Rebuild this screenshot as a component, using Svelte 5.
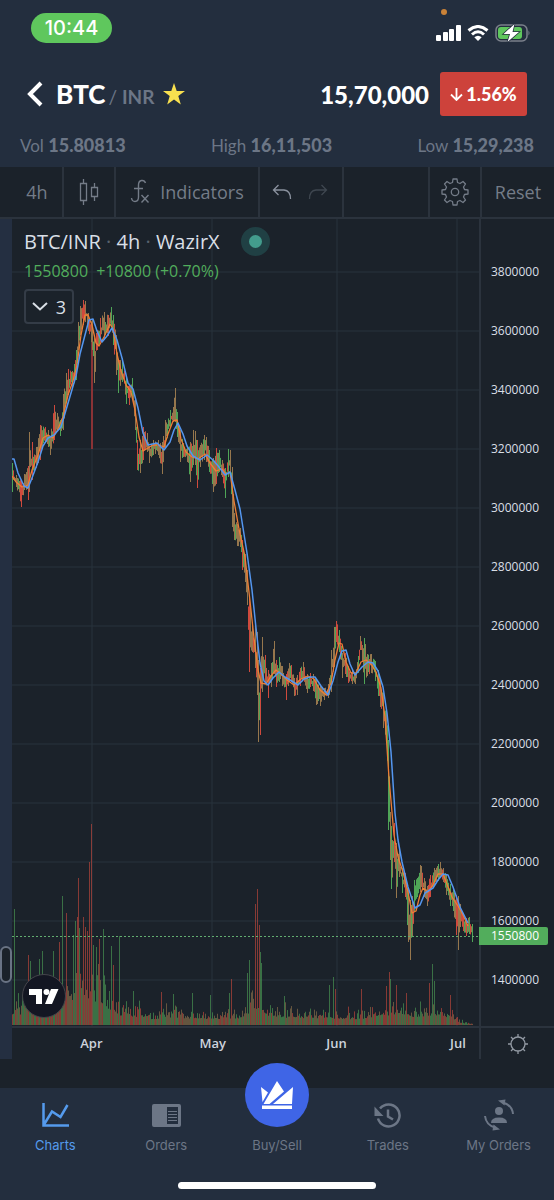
<script lang="ts">
    // [x, high, low] of the price envelope
    const envelope = [
        [12, 463, 492], [16, 475, 487], [21, 480, 507], [24, 474, 490], [28, 466, 500], [29, 432, 492],
        [32, 442, 480], [36, 447, 468], [40, 425, 460], [45, 427, 442], [48, 430, 447], [50, 436, 455],
        [54, 405, 440], [57, 413, 430], [60, 420, 436], [63, 394, 430], [66, 373, 400], [68, 369, 395],
        [72, 371, 387], [76, 350, 380], [78, 322, 350], [80, 306, 335], [83, 300, 325], [85, 301, 322],
        [88, 313, 331], [92, 320, 350], [94, 338, 383], [97, 330, 350], [100, 318, 342], [104, 312, 340],
        [108, 315, 336], [111, 307, 327], [113, 315, 345], [116, 335, 375], [118, 360, 393], [122, 358, 382],
        [126, 376, 404], [129, 385, 405], [132, 378, 398], [135, 400, 430], [137, 440, 470], [140, 440, 473],
        [143, 427, 460], [147, 433, 452], [149, 446, 463], [153, 440, 455], [158, 440, 455], [162, 442, 474],
        [165, 420, 447], [170, 410, 428], [173, 407, 422], [175, 388, 422], [177, 412, 437], [180, 430, 462],
        [183, 443, 457], [187, 448, 462], [190, 442, 482], [193, 430, 465], [195, 431, 465], [197, 440, 488],
        [200, 445, 467], [204, 435, 460], [206, 437, 462], [209, 450, 472], [213, 458, 492], [216, 448, 484],
        [219, 450, 472], [222, 460, 477], [225, 468, 498], [228, 449, 477], [230, 450, 474], [232, 467, 527],
        [234, 513, 540], [237, 524, 546], [240, 528, 547], [242, 540, 570], [245, 554, 582], [247, 570, 605],
        [249, 595, 672], [252, 624, 652], [255, 625, 668], [257, 632, 695], [258, 660, 742], [260, 668, 735],
        [262, 637, 692], [265, 655, 684], [268, 670, 698], [271, 663, 687], [274, 641, 674], [276, 660, 687],
        [279, 657, 682], [282, 666, 686], [286, 674, 700], [289, 663, 682], [291, 665, 682], [294, 678, 696],
        [297, 675, 695], [300, 668, 686], [303, 662, 680], [307, 674, 693], [310, 673, 687], [313, 674, 691],
        [316, 680, 705], [320, 686, 706], [324, 688, 700], [328, 684, 698], [331, 650, 692], [334, 627, 667],
        [336, 621, 642], [339, 630, 652], [342, 653, 678], [345, 653, 674], [348, 666, 683], [352, 670, 684],
        [355, 673, 684], [358, 656, 673], [360, 636, 650], [362, 645, 662], [364, 638, 684], [367, 654, 676],
        [371, 654, 673], [375, 661, 681], [378, 670, 696], [380, 678, 707], [383, 693, 728], [386, 708, 742],
        [388, 740, 830], [390, 812, 860], [391, 826, 889], [394, 823, 862], [396, 843, 898], [399, 848, 877],
        [402, 868, 893], [405, 873, 897], [408, 890, 942], [410, 900, 960], [412, 896, 937], [414, 880, 912],
        [417, 878, 897], [420, 865, 892], [421, 866, 887], [424, 878, 897], [427, 886, 906], [430, 875, 897],
        [434, 868, 886], [438, 864, 881], [440, 862, 877], [443, 868, 882], [446, 874, 895], [450, 884, 906],
        [453, 888, 911], [456, 895, 935], [458, 896, 950], [460, 904, 927], [463, 913, 931], [466, 918, 936],
        [469, 917, 934], [472, 924, 942],
    ];

    const volumeLevels = [
        [12, 34], [22, 34], [32, 52], [50, 54], [62, 72], [76, 86], [90, 86], [100, 66], [108, 50],
        [120, 30], [134, 28], [150, 18], [168, 24], [185, 22], [200, 20], [222, 20], [240, 22], [252, 46],
        [264, 32], [285, 24], [310, 22], [340, 20], [355, 18], [378, 24], [395, 34], [415, 26],
        [432, 32], [452, 24], [458, 8], [472, 2],
    ];

    // [x, height, rising]
    const volumeSpikes = [
        [15, 116, 1], [29, 70, 0], [31, 64, 1], [40, 66, 1], [43, 74, 1], [54, 74, 1], [60, 83, 0],
        [63, 129, 1], [67, 112, 0], [74, 90, 1], [76, 104, 1], [78, 108, 0], [79, 147, 0], [80, 97, 1],
        [84, 108, 0], [86, 98, 0], [88, 94, 0], [90, 163, 0], [92, 201, 0], [94, 80, 1], [97, 78, 1],
        [100, 86, 0], [104, 96, 1], [112, 79, 1], [114, 60, 0], [120, 89, 1], [134, 34, 1], [162, 33, 0],
        [174, 31, 1], [193, 32, 1], [211, 30, 1], [230, 32, 1], [232, 46, 0], [248, 52, 1], [250, 65, 1],
        [256, 121, 0], [258, 136, 0], [260, 100, 0], [261, 73, 1], [262, 62, 1], [285, 29, 1],
        [330, 40, 1], [334, 48, 1], [336, 36, 0], [362, 36, 0], [387, 39, 0], [390, 53, 0], [391, 46, 1],
        [397, 40, 0], [407, 32, 0], [430, 42, 0], [433, 61, 1], [435, 44, 1], [451, 30, 0],
    ];

    const slowAverage = [
        [12, 459], [14, 459], [18, 473], [24, 486], [28, 488], [32, 478], [38, 462], [43, 446], [48, 438],
        [54, 435], [61, 427], [66, 410], [71, 393], [76, 376], [80, 354], [85, 335], [89, 320], [93, 319],
        [97, 331], [102, 342], [107, 336], [112, 328], [117, 340], [122, 358], [128, 383], [133, 389],
        [138, 408], [143, 433], [148, 445], [157, 443], [164, 450], [170, 442], [174, 430], [178, 423],
        [183, 434], [187, 446], [193, 456], [200, 460], [207, 455], [213, 460], [219, 467], [225, 475],
        [230, 472], [235, 490], [240, 509], [247, 553], [252, 590], [256, 628], [260, 663], [264, 681],
        [268, 685], [273, 678], [279, 672], [285, 677], [290, 680], [298, 685], [304, 679], [310, 677],
        [315, 677], [321, 686], [328, 695], [333, 681], [338, 662], [342, 651], [346, 650], [350, 664],
        [355, 675], [362, 667], [368, 662], [373, 663], [378, 671], [383, 687], [387, 713], [391, 752],
        [395, 813], [398, 840], [402, 862], [408, 887], [415, 908], [420, 905], [425, 893], [433, 888],
        [438, 880], [443, 874], [448, 875], [453, 887], [460, 907], [468, 923],
    ];

    const fastAverage = [
        [12, 476], [16, 482], [22, 487], [28, 485], [32, 470], [38, 455], [43, 438], [48, 435], [53, 438],
        [58, 429], [63, 417], [68, 395], [73, 381], [77, 365], [81, 335], [85, 315], [88, 315], [92, 325],
        [96, 343], [99, 346], [104, 337], [110, 324], [113, 329], [117, 354], [121, 371], [126, 385],
        [131, 392], [135, 410], [139, 437], [143, 451], [148, 448], [153, 445], [159, 445], [164, 447],
        [168, 434], [173, 421], [177, 420], [181, 439], [186, 452], [192, 457], [198, 459], [205, 454],
        [210, 463], [216, 471], [222, 469], [226, 474], [230, 472], [234, 501], [239, 529], [245, 557],
        [250, 601], [254, 638], [258, 670], [261, 683], [266, 684], [271, 676], [276, 670], [281, 674],
        [287, 680], [294, 685], [301, 679], [308, 676], [314, 679], [320, 690], [326, 695], [331, 683],
        [335, 660], [339, 643], [342, 644], [346, 662], [351, 673], [356, 673], [361, 662], [366, 660],
        [371, 664], [376, 672], [381, 688], [385, 717], [389, 778], [394, 835], [398, 857], [403, 872],
        [408, 892], [412, 913], [416, 911], [420, 895], [423, 888], [428, 892], [433, 885], [438, 874],
        [443, 874], [447, 884], [452, 897], [458, 906], [463, 915], [468, 926],
    ];

    const gridRows = Array.from({ length: 13 }, (_, i) => 272 + i * 59);
    const gridColumns = [92, 212, 337, 457];
    const prices = Array.from({ length: 13 }, (_, i) => 3800000 - i * 200000);
    const months = [
        { name: "Apr", at: "17%" },
        { name: "May", at: "43%" },
        { name: "Jun", at: "69.5%" },
        { name: "Jul", at: "95.5%" },
    ];

    let seed = 41;
    const random = () => {
        seed = (seed * 16807) % 2147483647;
        return seed / 2147483647;
    };

    const sample = (points: number[][], x: number, column: number) => {
        const next = points.findIndex((p) => p[0] >= x);
        if (next <= 0) return points[0][column];
        const a = points[next - 1];
        const b = points[next];
        return a[column] + ((b[column] - a[column]) * (x - a[0])) / (b[0] - a[0]);
    };

    const toLine = (points: number[][]) => points.map((p) => p.join(",")).join(" ");

    const tones = ["up", "down", "mixed", "mixed", "up", "mixed", "down", "mixed"];
    const candles = Array.from({ length: 461 }, (_, i) => {
        const x = 12 + i;
        const high = sample(envelope, x, 1);
        const low = sample(envelope, x, 2);
        const range = low - high;
        const exact = envelope.some((p) => p[0] === x);
        return {
            x,
            top: high + (exact ? 0 : random() * range * 0.45),
            bottom: low - (exact ? 0 : random() * range * 0.45),
            tone: tones[Math.floor(random() * tones.length)],
        };
    });

    const volumes = Array.from({ length: 461 }, (_, i) => {
        const x = 12 + i;
        const level = sample(volumeLevels, x, 1);
        const height = level * (0.3 + 0.7 * random() * random());
        return { x, height, tone: random() < 0.3 ? "up" : random() < 0.4 ? "down" : "mixed" };
    });
</script>

<div class="app">
    <div class="status">
        <span class="clock">10:44</span>
        <div class="indicators">
            <span class="recording"></span>
            <svg width="25" height="16" viewBox="0 0 25 16" fill="#fff">
                <rect x="0" y="10" width="5" height="6" rx="1" />
                <rect x="7" y="7" width="5" height="9" rx="1" />
                <rect x="13" y="4" width="5" height="12" rx="1" />
                <rect x="20" y="0" width="5" height="16" rx="1" />
            </svg>
            <svg width="22" height="16" viewBox="0 0 22 16" fill="none" stroke="#fff" stroke-width="3">
                <path d="M1.500 5.500Q11-2.500 20.500 5.500" />
                <path d="M5 9.500Q11 4 17 9.500" />
                <path d="M11 16 7.300 12.300Q11 9.200 14.700 12.300Z" fill="#fff" stroke="none" />
            </svg>
            <svg width="36" height="18" viewBox="0 0 36 18">
                <rect x="1" y="1" width="31" height="16" rx="5" fill="none" stroke="#7b808b" stroke-width="1.500" />
                <path d="M33.500 6.500Q35.500 9 33.500 11.500Z" fill="#7b808b" />
                <rect x="3" y="3" width="24" height="12" rx="3" fill="#5fc75d" />
                <path
                    d="M19.500 0 8.500 10H15L12.500 18 24 8H17.500Z"
                    fill="#fff"
                    stroke="#232e3e"
                    stroke-width="1.500"
                    paint-order="stroke"
                />
            </svg>
        </div>
    </div>

    <header>
        <button class="back" aria-label="Back">
            <svg width="16" height="26" viewBox="0 0 16 26" fill="none" stroke="#fff" stroke-width="4">
                <path d="M14 2 3 13 14 24" />
            </svg>
        </button>
        <h1>BTC<span>/ <b>INR</b></span></h1>
        <button class="star" aria-label="Favourite">
            <svg width="22" height="22" viewBox="0 0 22 22" fill="#f8e04f">
                <path d="M11 0 13.700 8H22L15.300 13 17.800 21.500 11 16.500 4.200 21.500 6.700 13 0 8H8.300Z" />
            </svg>
        </button>
        <strong class="last">15,70,000</strong>
        <span class="change">
            <svg width="13" height="13" viewBox="0 0 13 13" fill="none" stroke="#fff" stroke-width="1.800">
                <path d="M6.500 0V12M1 6.500 6.500 12 12 6.500" />
            </svg>
            1.56%
        </span>
    </header>

    <div class="stats">
        <span>Vol <b>15.80813</b></span>
        <span>High <b>16,11,503</b></span>
        <span>Low <b>15,29,238</b></span>
    </div>

    <main>
        <div class="toolbar">
            <button class="interval">4h</button>
            <button class="style" aria-label="Chart style">
                <svg width="20" height="28" viewBox="0 0 20 28" fill="none" stroke="currentColor" stroke-width="1.300">
                    <path d="M1.500 5.500H7.500V22.500H1.500ZM4.500 1V5.500M4.500 22.500V27M12.500 9.500H18.500V18.500H12.500ZM15.500 5V9.500M15.500 18.500V23" />
                </svg>
            </button>
            <button class="functions">
                <svg width="20" height="26" viewBox="0 0 20 26" fill="none" stroke="currentColor" stroke-width="1.400">
                    <path d="M15.500 4Q14.500 1 11.500 1.500 8.500 2 8.500 6V18Q8.500 22.500 5 22.500 2 22.500 1.500 19M4 9.500H13M11.500 16 18.500 23.500M18.500 16 11.500 23.500" />
                </svg>
                Indicators
            </button>
            <div class="history">
                <button aria-label="Undo">
                    <svg width="20" height="16" viewBox="0 0 20 16" fill="none" stroke="#8b929e" stroke-width="1.300">
                        <path d="M6.500 1 1.500 6 6.500 11M1.500 6H12Q18.500 6.500 18.500 15" />
                    </svg>
                </button>
                <button aria-label="Redo" disabled>
                    <svg width="20" height="16" viewBox="0 0 20 16" fill="none" stroke="#3f4750" stroke-width="1.300">
                        <path d="M13.500 1 18.500 6 13.500 11M18.500 6H8Q1.500 6.500 1.500 15" />
                    </svg>
                </button>
            </div>
            <button class="settings" aria-label="Settings">
                <svg width="28" height="28" viewBox="0 0 28 28" fill="none" stroke="currentColor" stroke-width="1.300" stroke-linejoin="round">
                    <path
                        d="M12 1H16L16.500 4.500 19 5.500 22 3.500 24.500 6 22.500 9 23.500 11.500 27 12V16L23.500 16.500 22.500 19 24.500 22 22 24.500 19 22.500 16.500 23.500 16 27H12L11.500 23.500 9 22.500 6 24.500 3.500 22 5.500 19 4.500 16.500 1 16V12L4.500 11.500 5.500 9 3.500 6 6 3.500 9 5.500 11.500 4.500Z"
                    />
                    <circle cx="14" cy="14" r="3.700" />
                </svg>
            </button>
            <button class="reset">Reset</button>
        </div>

        <div class="chart">
            <div class="plot">
                <svg class="series" viewBox="12 219 467 807" preserveAspectRatio="none" role="img" aria-label="BTC/INR price">
                    {#each gridRows as y}
                        <path class="grid" d="M12 {y}H479" />
                    {/each}
                    {#each gridColumns as x}
                        <path class="grid" d="M{x} 219V1026" />
                    {/each}
                    <g class="volume">
                        {#each volumes as bar}
                            <rect class={bar.tone} x={bar.x} y={1025 - bar.height} width="1" height={bar.height} />
                        {/each}
                        {#each volumeSpikes as [x, height, rising]}
                            <rect class={rising ? "up" : "down"} x={x - 1} y={1025 - height} width="1" {height} />
                        {/each}
                    </g>
                    <path class="wick" d="M92 340V449" />
                    {#each candles as candle}
                        <rect
                            class={candle.tone}
                            x={candle.x}
                            y={candle.top}
                            width="1"
                            height={Math.max(2, candle.bottom - candle.top)}
                        />
                    {/each}
                    <polyline class="fast" points={toLine(fastAverage)} />
                    <polyline class="slow" points={toLine(slowAverage)} />
                    <path class="current" d="M12 936.500H479" />
                </svg>

                <div class="legend">
                    <div class="title">
                        <h2>BTC/INR <i>·</i> 4h <i>·</i> WazirX</h2>
                        <span class="open"></span>
                    </div>
                    <p>1550800 <span>+10800 (+0.70%)</span></p>
                    <button>
                        <svg width="16" height="9" viewBox="0 0 16 9" fill="none" stroke="currentColor" stroke-width="2">
                            <path d="M1 1 8 7.500 15 1" />
                        </svg>
                        3
                    </button>
                </div>

                <a class="brand" href="#chart" aria-label="TradingView">
                    <svg width="30" height="15" viewBox="0 0 30 15" fill="#fff">
                        <path d="M0 0H13V15H7V6H0ZM22 0H29.500L23 15H16Z" />
                        <circle cx="17.500" cy="3" r="3" />
                    </svg>
                </a>
            </div>

            <div class="prices">
                {#each prices as price}
                    <span>{price}</span>
                {/each}
                <strong>1550800</strong>
            </div>

            <svg class="months">
                {#each months as month}
                    <text x={month.at} y="20">{month.name}</text>
                {/each}
            </svg>

            <button class="scale" aria-label="Scale settings">
                <svg width="20" height="20" viewBox="0 0 20 20" fill="none" stroke="currentColor" stroke-width="1.300">
                    <circle cx="10" cy="10" r="7" />
                    <path d="M10 3V0M10 17V20M3 10H0M17 10H20M5 5 3 3M15 5 17 3M5 15 3 17M15 15 17 17" />
                </svg>
            </button>
        </div>
        <span class="drawer"></span>
    </main>

    <nav>
        <a class="active" href="#charts">
            <span class="icon">
                <svg width="27" height="24" viewBox="0 0 27 24" fill="none" stroke="currentColor" stroke-width="2.500">
                    <path d="M1.500 0V22.500H27M2 21.500 10 8.500 18.500 14 25.500 2" />
                </svg>
            </span>
            Charts
        </a>
        <a href="#orders">
            <span class="icon">
                <svg width="29" height="23" viewBox="0 0 29 23" fill="currentColor">
                    <path
                        fill-rule="evenodd"
                        d="M2 0H27Q29 0 29 2V21Q29 23 27 23H2Q0 23 0 21V2Q0 0 2 0ZM15 3V20H26V3Z"
                    />
                    <path d="M16 7H25V8H16ZM16 10H25V11H16ZM16 13H25V14H16ZM16 16H25V17H16Z" />
                </svg>
            </span>
            Orders
        </a>
        <a class="trade" href="#trade">
            <span class="icon">
                <svg width="34" height="30" viewBox="0 0 34 30" fill="#fff">
                    <path d="M1 7 8 12.500 2.500 22ZM17 1 24 11.500 9.500 24H3.500ZM33 7 32 24H13Z" />
                    <path d="M2 25.500H32V29H2Z" />
                </svg>
            </span>
            Buy/Sell
        </a>
        <a href="#trades">
            <span class="icon">
                <svg width="27" height="25" viewBox="0 0 27 25" fill="none" stroke="currentColor" stroke-width="2.500">
                    <path d="M4 15.500A11 11 0 1 0 6 5.500M14 6.500V13.500L19 16.500" />
                    <path d="M0.500 3.500V13H9.500L6 9.500Z" fill="currentColor" stroke="none" />
                </svg>
            </span>
            Trades
        </a>
        <a href="#my-orders">
            <span class="icon">
                <svg width="32" height="32" viewBox="0 0 32 32" fill="currentColor">
                    <circle cx="16" cy="12" r="4" />
                    <path d="M8 24Q8 18.500 16 18.500T24 24Z" />
                    <path d="M20 3.500Q29 6 30 15M2 17Q3 26 12 28.500" fill="none" stroke="currentColor" stroke-width="2" />
                    <path d="M15 1.500 22.500 0.500 21.500 6.500ZM17 30.500 9.500 31.500 10.500 25.500Z" />
                </svg>
            </span>
            My Orders
        </a>
    </nav>
    <div class="home"><span></span></div>
</div>

<style>
    :global(body) {
        background-color: #232e3e;
    }

    .app {
        --bar: #232e3e;
        --panel: #1b222a;
        --line: #2b333d;
        --muted: #6c7686;
        display: flex;
        flex-direction: column;
        min-height: 100vh;
        background-color: var(--bar);
        color: #fff;
        font-family: Lato, "Open Sans", sans-serif;
    }

    button {
        display: flex;
        align-items: center;
        justify-content: center;
        padding: 0;
        border: none;
        background: none;
        color: inherit;
        font: inherit;
    }

    svg {
        display: block;
        flex: none;
    }

    .status {
        display: flex;
        justify-content: space-between;
        align-items: flex-start;
        height: 43px;
        padding: 13px 23px 0 31px;
    }

    .clock {
        width: 81px;
        border-radius: 15px;
        background-color: #5fc75d;
        font: 500 20px/30px Inter, sans-serif;
        text-align: center;
    }

    .indicators {
        position: relative;
        display: flex;
        align-items: center;
        gap: 6px;
        padding-top: 11px;
    }

    .recording {
        position: absolute;
        top: -4px;
        left: 5px;
        width: 6px;
        height: 6px;
        border-radius: 50%;
        background-color: #c98238;
    }

    header {
        display: flex;
        align-items: center;
        height: 76px;
        padding: 0 27px;
    }

    h1 {
        margin: 0 0 0 13px;
        font-size: 26px;
        font-weight: 900;
    }

    h1 span {
        margin-left: 3px;
        color: var(--muted);
        font-size: 19px;
        font-weight: 400;
    }

    h1 b {
        font-weight: 700;
    }

    .star {
        margin-left: 9px;
    }

    .last {
        margin-left: auto;
        font-size: 24px;
        font-weight: 900;
    }

    .change {
        display: flex;
        align-items: center;
        justify-content: center;
        gap: 3px;
        width: 87px;
        height: 44px;
        margin-left: 11px;
        border-radius: 3px;
        background-color: #cd423b;
        font-size: 18px;
        font-weight: 900;
    }

    .stats {
        display: flex;
        justify-content: space-between;
        height: 35px;
        padding: 0 20px;
        color: var(--muted);
        font-size: 17px;
        line-height: 26px;
    }

    .stats b {
        font-size: 18px;
        font-weight: 900;
    }

    main {
        position: relative;
        flex: 1;
        display: flex;
        flex-direction: column;
        background-color: var(--panel);
        font-family: "Open Sans", "Noto Sans", sans-serif;
    }

    .toolbar {
        display: flex;
        height: 50px;
        padding-left: 12px;
        border-bottom: 2px solid var(--line);
        color: #747c88;
        font-size: 18px;
    }

    .toolbar > * {
        border-right: 2px solid var(--line);
    }

    .interval,
    .style {
        width: 52px;
    }

    .functions {
        gap: 10px;
        width: 144px;
    }

    .history {
        display: flex;
        gap: 16px;
        width: 84px;
        box-sizing: border-box;
        padding-left: 12px;
    }

    .settings {
        width: 54px;
        margin-left: auto;
        border-left: 2px solid var(--line);
    }

    .reset {
        width: 72px;
        border-right: none;
    }

    .chart {
        display: grid;
        grid-template-columns: 1fr 75px;
        grid-template-rows: auto 33px;
        border-left: 12px solid #242f41;
    }

    .plot {
        position: relative;
        min-width: 0;
    }

    .series {
        position: absolute;
        width: 100%;
        height: 100%;
    }

    .grid {
        stroke: #29323c;
    }

    .up {
        fill: #4fa557;
    }

    .down {
        fill: #cf4a3d;
    }

    .mixed {
        fill: #96774d;
    }

    .volume {
        opacity: 0.6;
    }

    .wick {
        stroke: #8a3336;
        stroke-width: 2;
    }

    polyline {
        fill: none;
        stroke-linejoin: round;
    }

    .fast {
        stroke: #ef7d35;
        stroke-width: 1.3;
    }

    .slow {
        stroke: #5597f0;
        stroke-width: 1.5;
    }

    .current {
        stroke: #62ad70;
        stroke-width: 1;
        stroke-dasharray: 2 2;
    }

    .legend {
        position: absolute;
        top: 8px;
        left: 12px;
    }

    .title {
        display: flex;
        align-items: center;
        gap: 21px;
    }

    h2 {
        margin: 0;
        color: #d9dfe6;
        font-size: 20px;
        font-weight: 400;
        line-height: 28px;
    }

    h2 i {
        color: #59626e;
        font-style: normal;
    }

    .open {
        width: 13px;
        height: 13px;
        border: 8px solid #204044;
        border-radius: 50%;
        background-color: #439c8d;
    }

    .legend p {
        margin: 3px 0 6px;
        color: #52ad5c;
        font-size: 16px;
        line-height: 24px;
    }

    .legend p span {
        margin-left: 4px;
    }

    .legend button {
        gap: 8px;
        width: 50px;
        height: 35px;
        border: 2px solid #343c47;
        border-radius: 4px;
        color: #d9dfe6;
        font-size: 18px;
    }

    .brand {
        position: absolute;
        bottom: 8px;
        left: 10px;
        display: grid;
        place-items: center;
        width: 42px;
        height: 42px;
        border: 1px solid #44444b;
        border-radius: 50%;
        background-color: #131622;
    }

    .prices {
        position: relative;
        display: flex;
        flex-direction: column;
        padding: 23px 0 17px;
        border-left: 2px solid var(--line);
        box-sizing: border-box;
        color: #d9dfe6;
        font-size: 12px;
        line-height: 59px;
    }

    .prices span {
        padding-left: 10px;
    }

    .prices strong {
        position: absolute;
        bottom: 81px;
        left: -2px;
        width: 57px;
        padding-left: 12px;
        border-radius: 0 2px 2px 0;
        background-color: #52ad5c;
        color: #fff;
        font-weight: 400;
        line-height: 18px;
    }

    .months {
        width: 100%;
        height: 33px;
        border-top: 2px solid var(--line);
        box-sizing: border-box;
        fill: #cdd3dc;
        font-size: 13px;
        font-weight: 600;
        text-anchor: middle;
    }

    .scale {
        border-top: 2px solid var(--line);
        border-left: 2px solid var(--line);
        color: #9299a3;
    }

    .drawer {
        position: absolute;
        top: 779px;
        left: 0;
        width: 8px;
        height: 33px;
        border: 2px solid #697384;
        border-radius: 6px;
        background-color: var(--panel);
    }

    nav {
        display: grid;
        grid-template-columns: repeat(5, 1fr);
        height: 90px;
        font-family: Inter, sans-serif;
        font-size: 13px;
        line-height: 18px;
    }

    nav a {
        display: flex;
        flex-direction: column;
        align-items: center;
        padding-top: 6px;
        color: var(--muted);
        text-decoration: none;
    }

    .icon {
        display: grid;
        place-items: center;
        height: 42px;
    }

    nav .active {
        color: #559bed;
    }

    .trade .icon {
        width: 64px;
        height: 64px;
        margin-top: -31px;
        margin-bottom: 9px;
        border-radius: 50%;
        background-color: #3f65e6;
        z-index: 1;
    }

    .home {
        display: flex;
        justify-content: center;
        height: 22px;
    }

    .home span {
        width: 198px;
        height: 7px;
        margin-top: 4px;
        border-radius: 4px;
        background-color: #fff;
    }
</style>
